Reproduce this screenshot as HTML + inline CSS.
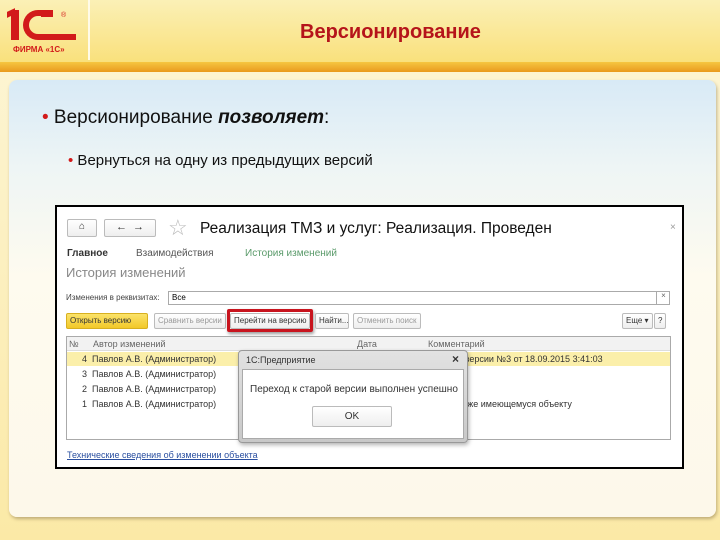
<!DOCTYPE html>
<html><head><meta charset="utf-8"><style>
*{margin:0;padding:0;box-sizing:border-box}
body{width:720px;height:540px;position:relative;overflow:hidden;font-family:"Liberation Sans",sans-serif;background:linear-gradient(#fdf6d8,#fbe9a6)}
.a{position:absolute}
.hdr{left:0;top:0;width:720px;height:64px;background:linear-gradient(#fbf0b6,#f9e07a)}
.bar{left:0;top:62px;width:720px;height:10px;background:linear-gradient(#f6c640,#e99a1e)}
.panel{left:9px;top:80px;width:707px;height:437px;border-radius:8px;background:linear-gradient(#d8eaf6 0%,#eef5f5 20%,#fefbef 45%,#fdf8ea 100%);box-shadow:1px 2px 3px rgba(120,100,60,.45)}
.btn{border:1px solid #bbb;border-radius:2px;background:linear-gradient(#fff,#eee);font-size:8px;color:#999;height:16px;line-height:14px;padding:0 3px;white-space:nowrap;overflow:hidden}
.row{font-size:9px;color:#333;white-space:nowrap}
</style></head><body>
<div class="a hdr"></div>
<div class="a" style="left:88px;top:0;width:2px;height:60px;background:#fffbe8"></div>
<div class="a bar"></div>
<div class="a" style="left:11px;top:10px;width:8px;height:30px;background:#d21a1a"></div>
<div class="a" style="left:7px;top:10px;width:8px;height:6px;background:#d21a1a;transform:skewY(-25deg)"></div>
<div class="a" style="left:23px;top:10px;width:30px;height:30px;border:6px solid #d21a1a;border-right:none;border-radius:15px 0 0 15px"></div>
<div class="a" style="left:41px;top:14px;width:12px;height:3px;background:#d21a1a"></div>
<div class="a" style="left:46px;top:34px;width:30px;height:6px;background:#d21a1a"></div>
<div class="a" style="left:61px;top:12px;font-size:7px;color:#d21a1a">®</div>
<div class="a" style="left:13px;top:45px;font-size:8px;font-weight:bold;color:#d21a1a">ФИРМА «1С»</div>
<div class="a" style="left:300px;top:21px;font-size:20px;font-weight:bold;color:#b5141a">Версионирование</div>
<div class="a panel"></div>
<div class="a" style="left:42px;top:107px;font-size:19px;color:#111"><span style="color:#d21a1a">•</span> Версионирование <b><i>позволяет</i></b>:</div>
<div class="a" style="left:68px;top:152px;font-size:15px;color:#111"><span style="color:#d21a1a">•</span> Вернуться на одну из предыдущих версий</div>

<div class="a" style="left:55px;top:205px;width:629px;height:264px;border:2px solid #000;background:#fff"></div>
<div class="a btn" style="left:67px;top:219px;width:30px;height:18px;color:#333;text-align:center;font-size:10px">⌂</div>
<div class="a btn" style="left:104px;top:219px;width:52px;height:18px;color:#333;text-align:center;font-size:11px">←&nbsp;&nbsp;→</div>
<div class="a" style="left:168px;top:215px;font-size:22px;color:#bbb">☆</div>
<div class="a" style="left:200px;top:220px;font-size:15.5px;color:#111;white-space:nowrap">Реализация ТМЗ и услуг: Реализация. Проведен</div>
<div class="a" style="left:670px;top:222px;font-size:10px;color:#999">×</div>
<div class="a row" style="left:67px;top:248px;font-size:10px;font-weight:bold">Главное</div>
<div class="a row" style="left:136px;top:248px;font-size:10px;color:#555">Взаимодействия</div>
<div class="a row" style="left:245px;top:248px;font-size:10px;color:#5a9a6a">История изменений</div>
<div class="a row" style="left:66px;top:265px;font-size:13px;color:#888">История изменений</div>
<div class="a row" style="left:66px;top:293px;font-size:8px;color:#444">Изменения в реквизитах:</div>
<div class="a" style="left:168px;top:291px;width:502px;height:14px;border:1px solid #aaa;font-size:8px;padding-left:3px;line-height:12px">Все</div>
<div class="a" style="left:656px;top:291px;width:14px;height:14px;border-left:1px solid #aaa;font-size:8px;text-align:center;color:#666">×</div>
<div class="a btn" style="left:66px;top:313px;width:82px;background:linear-gradient(#fbe36a,#f2c829);border-color:#d8b020;color:#333">Открыть версию</div>
<div class="a btn" style="left:154px;top:313px;width:72px">Сравнить версии</div>
<div class="a" style="left:227px;top:309px;width:86px;height:23px;border:3px solid #c8141e;border-radius:2px;box-shadow:1px 2px 3px rgba(0,0,0,.4)"></div>
<div class="a btn" style="left:230px;top:313px;width:80px;color:#333">Перейти на версию</div>
<div class="a btn" style="left:315px;top:313px;width:34px;color:#333">Найти...</div>
<div class="a btn" style="left:353px;top:313px;width:68px">Отменить поиск</div>
<div class="a btn" style="left:622px;top:313px;color:#333">Еще ▾</div>
<div class="a btn" style="left:654px;top:313px;color:#333">?</div>
<div class="a" style="left:66px;top:336px;width:605px;height:104px;border:1px solid #aaa"></div>
<div class="a" style="left:67px;top:337px;width:603px;height:14px;background:#f2f2f2;border-bottom:1px solid #ddd"></div>
<div class="a row" style="left:69px;top:339px;color:#666">№</div>
<div class="a row" style="left:93px;top:339px;color:#666">Автор изменений</div>
<div class="a row" style="left:357px;top:339px;color:#666">Дата</div>
<div class="a row" style="left:428px;top:339px;color:#666">Комментарий</div>
<div class="a" style="left:67px;top:352px;width:603px;height:14px;background:#fbefaa"></div>
<div class="a row" style="left:82px;top:354px">4&nbsp;&nbsp;Павлов А.В. (Администратор)</div>
<div class="a row" style="left:420px;top:354px">Переход к версии №3 от 18.09.2015 3:41:03</div>
<div class="a row" style="left:82px;top:369px">3&nbsp;&nbsp;Павлов А.В. (Администратор)</div>
<div class="a row" style="left:82px;top:384px">2&nbsp;&nbsp;Павлов А.В. (Администратор)</div>
<div class="a row" style="left:82px;top:399px">1&nbsp;&nbsp;Павлов А.В. (Администратор)</div>
<div class="a row" style="left:420px;top:399px">...дана по уже имеющемуся объекту</div>
<div class="a row" style="left:67px;top:450px;color:#2a4fa0;text-decoration:underline">Технические сведения об изменении объекта</div>

<div class="a" style="left:238px;top:350px;width:230px;height:93px;border-radius:4px;background:linear-gradient(#e2e2e2,#c8c8c8);border:1px solid #999;box-shadow:1px 2px 4px rgba(0,0,0,.3)"></div>
<div class="a row" style="left:246px;top:355px;color:#333">1С:Предприятие</div>
<div class="a" style="left:452px;top:352px;font-size:12px;font-weight:bold;color:#333">×</div>
<div class="a" style="left:242px;top:369px;width:222px;height:70px;background:#fff;border:1px solid #aaa"></div>
<div class="a row" style="left:250px;top:384px;font-size:10px">Переход к старой версии выполнен успешно</div>
<div class="a btn" style="left:312px;top:406px;width:80px;height:21px;line-height:19px;text-align:center;color:#333;font-size:10px">OK</div>
</body></html>
